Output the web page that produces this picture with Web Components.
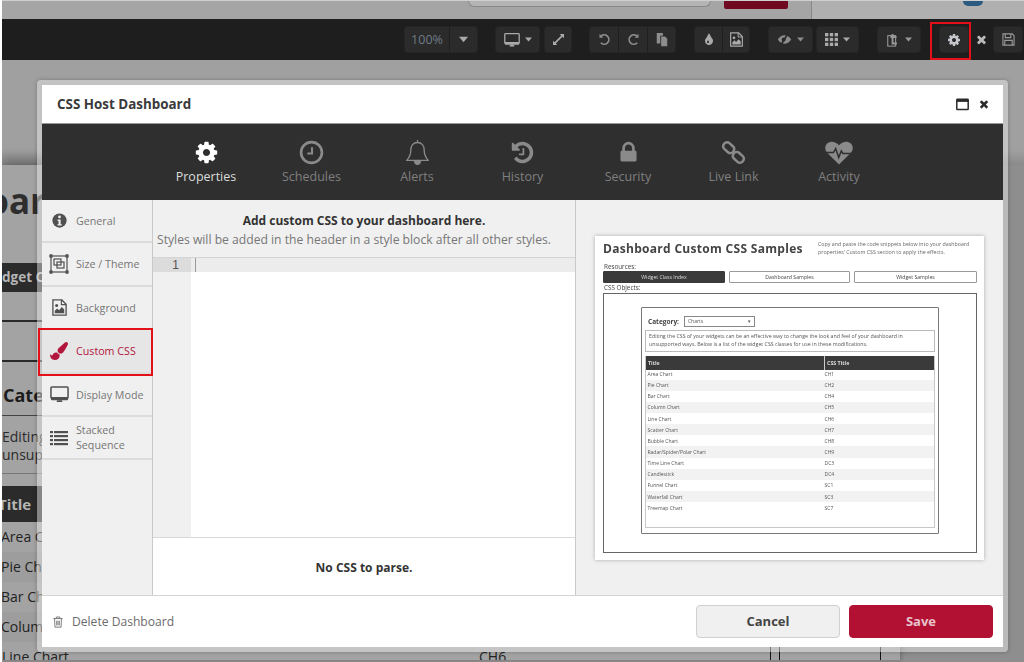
<!DOCTYPE html>
<html><head><meta charset="utf-8"><title>CSS Host Dashboard</title>
<style>
html,body{margin:0;padding:0;width:1024px;height:662px;overflow:hidden;background:#fff}
body{font-family:"Open Sans","Noto Sans",sans-serif}
</style></head><body>
<x-app>
  <x-backdrop slot="back"></x-backdrop>
  <x-modal slot="modal" heading="CSS Host Dashboard"></x-modal>
</x-app>
<script>
const FA={
gear:'M1152 896q0-106-75-181t-181-75-181 75-75 181 75 181 181 75 181-75 75-181zm512-109v222q0 12-8 23t-20 13l-185 28q-19 54-39 91 35 50 107 138 10 12 10 25t-9 23q-27 37-99 108t-94 71q-12 0-26-9l-138-108q-44 23-91 38-16 136-29 186-7 27-35 27h-222q-14 0-24.5-8.5t-11.5-21.5l-28-184q-49-16-90-37l-141 107q-10 9-25 9-14 0-25-11-126-114-165-168-7-10-7-23 0-12 8-23 15-21 51-66.5t54-70.5q-27-50-41-99l-183-27q-13-2-21-12.5t-8-23.5v-222q0-12 8-23t19-13l186-28q14-46 39-92-40-57-107-138-10-12-10-24 0-10 9-23 26-36 98.5-107.5t94.5-71.5q13 0 26 10l138 107q44-23 91-38 16-136 29-186 7-27 35-27h222q14 0 24.5 8.5t11.5 21.5l28 184q49 16 90 37l142-107q9-9 24-9 13 0 25 10 129 119 165 170 7 8 7 22 0 12-8 23-15 21-51 66.5t-54 70.5q26 50 41 98l183 28q13 2 21 12.5t8 23.5z',
history:'M1664 896q0 156-61 298t-164 245-245 164-298 61q-172 0-327-72.5t-264-204.5q-7-10-6.5-22.5t8.5-20.5l137-138q10-9 25-9 16 2 23 12 73 95 179 147t225 52q104 0 198.5-40.5t163.5-109.5 109.5-163.5 40.5-198.5-40.5-198.5-109.5-163.5-163.5-109.5-198.5-40.5q-98 0-188 35.5t-160 101.5l137 138q31 30 14 69-17 40-59 40h-448q-26 0-45-19t-19-45v-448q0-42 40-59 39-17 69 14l130 129q107-101 244.5-156.5t284.5-55.5q156 0 298 61t245 164 164 245 61 298zm-640-288v448q0 14-9 23t-23 9h-320q-14 0-23-9t-9-23v-64q0-14 9-23t23-9h224v-352q0-14 9-23t23-9h64q14 0 23 9t9 23z',
lock:'M640 768h512v-192q0-106-75-181t-181-75-181 75-75 181v192zm832 96v576q0 40-28 68t-68 28h-960q-40 0-68-28t-28-68v-576q0-40 28-68t68-28h32v-192q0-184 132-316t316-132 316 132 132 316v192h32q40 0 68 28t28 68z',
times:'M1490 1322q0 40-28 68l-136 136q-28 28-68 28t-68-28l-294-294-294 294q-28 28-68 28t-68-28l-136-136q-28-28-28-68t28-68l294-294-294-294q-28-28-28-68t28-68l136-136q28-28 68-28t68 28l294 294 294-294q28-28 68-28t68 28l136 136q28 28 28 68t-28 68l-294 294 294 294q28 28 28 68z',
tint:'M896 1152q0-36-20-69-1-1-15.5-22.5t-25.5-38-25-44-21-50.5q-4-16-21-16t-21 16q-7 23-21 50.5t-25 44-25.5 38-15.5 22.5q-20 33-20 69 0 53 37.5 90.5t90.5 37.5 90.5-37.5 37.5-90.5zm512-128q0 212-150 362t-362 150-362-150-150-362q0-145 81-275 6-9 62.5-90.5t101-151 99.5-178 83-201.5q9-30 34-47t51-17 51.5 17 33.5 47q28 93 83 201.5t99.5 178 101 151 62.5 90.5q81 127 81 275z',
brush:'M1615 0q70 0 122.5 46.5t52.5 116.5q0 63-45 151-332 629-465 752-97 91-218 91-126 0-216.5-92.5t-90.5-219.5q0-128 92-212l638-579q59-54 130-54zm-909 1034q39 76 106.5 130t150.5 76l1 71q4 213-129.5 347t-348.5 134q-123 0-218-46.5t-152.5-127.5-86.5-183-29-220q7 5 41 30t62 44.5 59 36.5 46 17q41 0 55-37 25-66 57.5-112.5t69.5-76 88-47.5 103-25.5 125-10.5z'
};
const fa=k=>`<svg viewBox="0 0 1792 1792"><path fill="currentColor" d="${FA[k]}"/></svg>`;
const ICONS={
gear:fa('gear'),history:fa('history'),lock:fa('lock'),times:fa('times'),tint:fa('tint'),brush:fa('brush'),
clock:`<svg viewBox="0 0 24 24" fill="none" stroke="currentColor"><circle cx="12" cy="12" r="10" stroke-width="2.6"/><path d="M12.5 7v6H8" stroke-width="2"/></svg>`,
bell:`<svg viewBox="0 0 24 26" fill="none" stroke="currentColor" stroke-width="1.3"><path d="M12 1v2.400M12 3.400c-4.200 0-6.400 3-6.400 7 0 5-1.300 7.400-4 10.200h20.800c-2.700-2.800-4-5.200-4-10.200 0-4-2.200-7-6.400-7z" stroke-linejoin="round"/><path d="M9.200 21.600c.3 1.800 1.400 2.800 2.800 2.800s2.500-1 2.800-2.800z" fill="currentColor"/></svg>`,
link:`<svg viewBox="0 0 26 26" fill="none" stroke="currentColor" stroke-width="2.600"><rect x="1.800" y="4" width="12.400" height="8" rx="3.600" transform="rotate(42 8 8)"/><rect x="11.800" y="14" width="12.400" height="8" rx="3.600" transform="rotate(42 18 18)"/></svg>`,
heart:`<svg viewBox="0 0 28 24"><path fill="currentColor" d="M14 23.500 2.600 12.300C-.6 9-.4 4.600 2.400 2.200 5.400-.4 10.600.2 14 4.200c3.400-4 8.600-4.600 11.600-2 2.800 2.400 3 6.800-.2 10.100z"/><path fill="none" stroke="#2f2f2f" stroke-width="1.500" d="M1 11.500h7.500l2.200-4 3 9 2.600-6.600 1.600 2.600H27"/></svg>`,
win:`<svg viewBox="0 0 13 12"><rect x=".8" y=".8" width="11.400" height="10.200" rx=".6" fill="none" stroke="currentColor" stroke-width="1.500"/><rect x="1" y="1" width="11" height="2.400" fill="currentColor"/></svg>`,
info:`<svg viewBox="0 0 16 16"><circle cx="8" cy="8" r="7.600" fill="currentColor"/><circle cx="8" cy="4.200" r="1.500" fill="#f0f0f0"/><path d="M6 7h3.200v5H10.400v1.400H5.800V12H7V8.400H6z" fill="#f0f0f0"/></svg>`,
size:`<svg viewBox="0 0 20 20" fill="none" stroke="currentColor"><rect x="2" y="2" width="16" height="16" stroke-width="1.200"/><g fill="#555" stroke="none"><circle cx="2" cy="2" r="1.900"/><circle cx="18" cy="2" r="1.900"/><circle cx="2" cy="18" r="1.900"/><circle cx="18" cy="18" r="1.900"/></g><rect x="5" y="5" width="7" height="6" stroke-width="1.200"/><rect x="8" y="8" width="7" height="6" stroke-width="1.200"/></svg>`,
bg:`<svg viewBox="0 0 16 18"><path d="M1 1h9.500L15 5.500V17H1z" fill="none" stroke="currentColor" stroke-width="1.400"/><path d="M10 1v5h5" fill="none" stroke="currentColor" stroke-width="1.200"/><circle cx="5" cy="7" r="1.600" fill="currentColor"/><path d="M3 15v-2.500L5.500 10l2 2 3-3.400L13 11v4z" fill="currentColor"/></svg>`,
monitor:`<svg viewBox="0 0 20 18"><rect x="1" y="1" width="18" height="12" rx="1" fill="none" stroke="currentColor" stroke-width="1.600"/><path d="M1 11.500h18V14a1 1 0 0 1-1 1H2a1 1 0 0 1-1-1z" fill="currentColor"/><path d="M7.500 15h5l.6 2H6.900z" fill="currentColor"/></svg>`,
list:`<svg viewBox="0 0 18 16" fill="currentColor"><rect x="0" y="1" width="3" height="2.200"/><rect x="4" y="1" width="14" height="2.200"/><rect x="0" y="5" width="3" height="2.200"/><rect x="4" y="5" width="14" height="2.200"/><rect x="0" y="9" width="3" height="2.200"/><rect x="4" y="9" width="14" height="2.200"/><rect x="0" y="13" width="3" height="2.200"/><rect x="4" y="13" width="14" height="2.200"/></svg>`,
trash:`<svg viewBox="0 0 12 14" fill="none" stroke="currentColor" stroke-width="1"><path d="M.5 3h11M4 3V1.200h4V3M2 3l.4 10h7.200L10 3M4.500 5.500v5.500M6 5.500v5.500M7.500 5.500v5.500"/></svg>`,
caret:`<svg viewBox="0 0 10 6"><path d="M0 0h10L5 6z" fill="currentColor"/></svg>`,
expand:`<svg viewBox="0 0 14 14" fill="currentColor"><path d="M8.500 0H14v5.500L12 3.500 3.500 12 5.500 14H0V8.500L2 10.500 10.500 2z"/></svg>`,
undo:`<svg viewBox="0 0 14 14" fill="none" stroke="currentColor" stroke-width="1.800"><path d="M3.500 3.200A5 5 0 1 1 3 10.500"/><path d="M1.600 .8v4.200h4.200z" fill="currentColor" stroke="none"/></svg>`,
redo:`<svg viewBox="0 0 14 14" fill="none" stroke="currentColor" stroke-width="1.800"><path d="M10.500 3.200A5 5 0 1 0 11 10.500"/><path d="M12.400 .8v4.200H8.200z" fill="currentColor" stroke="none"/></svg>`,
paste:`<svg viewBox="0 0 14 16" fill="currentColor"><path d="M1 0h7v3H5v9H1z"/><path d="M6 4h4.500L13 6.500V15H6z"/></svg>`,
eye:`<svg viewBox="0 0 18 14"><path d="M1 7c2.500-3.800 5-5 8-5s5.500 1.200 8 5c-2.500 3.800-5 5-8 5s-5.500-1.200-8-5z" fill="currentColor"/><circle cx="8" cy="7" r="2.400" fill="#2a2a2a"/><path d="M12.500 1 5 13" stroke="#2a2a2a" stroke-width="2"/></svg>`,
grid:`<svg viewBox="0 0 14 14" fill="currentColor"><rect width="3.600" height="3.600"/><rect x="5.200" width="3.600" height="3.600"/><rect x="10.400" width="3.600" height="3.600"/><rect y="5.200" width="3.600" height="3.600"/><rect x="5.200" y="5.200" width="3.600" height="3.600"/><rect x="10.400" y="5.200" width="3.600" height="3.600"/><rect y="10.400" width="3.600" height="3.600"/><rect x="5.200" y="10.400" width="3.600" height="3.600"/><rect x="10.400" y="10.400" width="3.600" height="3.600"/></svg>`,
tee:`<svg viewBox="0 0 14 16" fill="none" stroke="currentColor"><rect x="1" y="3" width="9" height="12" stroke-width="1.200"/><path d="M6.500 1v11h5M4 4.500h7" stroke-width="2.200"/></svg>`,
save:`<svg viewBox="0 0 14 14" fill="none" stroke="currentColor" stroke-width="1.200"><path d="M1 1h10l2 2v10H1z"/><path d="M3.500 1v4h6V1M3 13V8h8v5"/></svg>`
};
const def=(name,html,init)=>customElements.define(name,class extends HTMLElement{
  constructor(){super();this.attachShadow({mode:'open'})}
  connectedCallback(){this.shadowRoot.innerHTML=typeof html==='function'?html(this):html;init&&init(this)}
});
def('x-icon',e=>`<style>:host{display:inline-flex;width:var(--s,16px);height:var(--s,16px);color:inherit;flex:none}svg{width:100%;height:100%;display:block}</style>${ICONS[e.getAttribute('name')]}`);

def('x-app',`<style>:host{display:block;position:relative;width:1024px;height:662px;overflow:hidden}
.m{position:absolute;left:37px;top:80px}</style>
<slot name="back"></slot><div class="m"><slot name="modal"></slot></div>`);

/* ---------- dimmed page behind the dialog ---------- */
def('x-cell',e=>`<style>:host{display:flex;align-items:center;justify-content:center;gap:5px;height:100%;color:#8d8d8d;font-size:12.500px;border-left:1px solid #1f1f1f;box-sizing:border-box}
:host(:first-child){border-left:0}</style><slot></slot>`);
def('x-group',`<style>:host{display:flex;height:25px;background:#2b2b2b;border-radius:3px;box-shadow:0 0 0 1px #252525}</style><slot></slot>`);
def('x-toolbar',`<style>:host{display:flex;align-items:center;height:41px;padding-left:403px;background:#1e1e1e;box-sizing:border-box;width:1022px;flex:none}
::slotted(*){flex:none}</style><slot></slot>`);
def('x-sheet',`<style>:host{display:block;width:898px;height:495px;background:#a3a3a3;color:#1c1c1c;font-weight:400;overflow:hidden;box-shadow:0 -8px 10px rgba(0,0,0,.18),2px 0 3px rgba(0,0,0,.15)}
h1{margin:0;height:70px;width:44px;display:flex;justify-content:flex-end;line-height:72px;font-size:35px;font-weight:700;color:#2e2e2e;white-space:nowrap}
.bar{background:#2b2b2b;color:#b5b5b5;font-weight:700;font-size:13.500px;white-space:nowrap}
.res{height:29px;line-height:29px;margin-top:28px}
.ln{height:2px;background:#2a2a2a}
.cat{height:40px;line-height:40px;font-size:18px;font-weight:700;padding-left:1px;color:#1c1c1c;margin-top:13px}
.l1{height:1px;background:#444}
.tx{font-size:14px;line-height:18px;color:#2a2a2a;padding-top:12px;height:38px}
.l2{height:1px;background:#777}
.tt{height:36px;line-height:36px;text-indent:-4px;font-size:15px;margin-top:12px}
.r{height:30px;line-height:30px;font-size:14px;white-space:nowrap;color:#222;margin-left:-1px}
.r.a{background:#9d9d9d}
.last{display:flex;height:30px;line-height:30px;font-size:14px;color:#222}
.last b{font-weight:400;width:477px}.last i{font-style:normal;width:291px}
.last u{width:1px;background:#111;text-decoration:none;margin-right:8px}
.last u+u{margin-right:100px}
.last u+u+u{margin-right:0}
</style>
<h1>oar</h1>
<div class="bar res">dget C</div>
<div class="ln" style="margin-top:28px"></div><div class="ln" style="margin-top:38px"></div>
<div class="cat">Cate</div><div class="l1"></div>
<div class="tx">Editing<br>unsup</div><div class="l2" style="margin-top:7px"></div>
<div class="bar tt">Title</div>
<div class="r">Area Ch</div><div class="r a">Pie Cha</div><div class="r">Bar Ch</div><div class="r a">Colum</div>
<div class="last"><b>Line Chart</b><i>CH6</i><u></u><u></u><u></u></div>`);
def('x-backdrop',`<style>:host{display:block;width:1024px;height:662px;padding-left:2px;box-sizing:border-box}
.w{width:1022px;height:662px;background:#8e8e8e;display:flex;flex-direction:column;overflow:hidden}
.top{height:19px;flex:none;display:flex;background:#a5a5a5;border-top:1px solid #cfcfcf;box-sizing:border-box}
.pill{width:241px;height:5px;margin-left:466px;border:1px solid #888;border-top:0;border-radius:0 0 8px 8px;background:#b4b4b4}
.red{width:64px;height:8px;margin-left:13px;background:#6f0a20;border-radius:0 0 2px 2px}
.rt{flex:1;margin-left:23px;border-left:1px solid #888;background:#b0b0b0;display:flex}
.dot{width:20px;height:5px;margin-left:151px;background:#2b5a80;border-radius:0 0 10px 10px}
.gap{height:90px;background:#a0a0a0;flex:none}
.band{height:15px;flex:none;background:linear-gradient(#a0a0a0,#8a8a8a)}
</style>
<div class="w">
<div class="top"><div class="pill"></div><div class="red"></div><div class="rt"><div class="dot"></div></div></div>
<x-toolbar>
 <x-group style="width:72px"><x-cell style="width:44px;color:#6f7b88">100%</x-cell><x-cell style="width:28px;color:#aaa"><x-icon name="caret" style="--s:9px"></x-icon></x-cell></x-group>
 <x-group style="margin-left:19px;width:43px"><x-cell style="width:43px;color:#aaa"><x-icon name="monitor" style="--s:16px"></x-icon><x-icon name="caret" style="--s:7px"></x-icon></x-cell></x-group>
 <x-group style="margin-left:6px;width:26px"><x-cell style="width:26px;color:#aaa"><x-icon name="expand" style="--s:11px"></x-icon></x-cell></x-group>
 <x-group style="margin-left:19px;width:85px"><x-cell style="width:28px"><x-icon name="undo" style="--s:13px"></x-icon></x-cell><x-cell style="width:29px"><x-icon name="redo" style="--s:13px"></x-icon></x-cell><x-cell style="width:28px"><x-icon name="paste" style="--s:14px"></x-icon></x-cell></x-group>
 <x-group style="margin-left:20px;width:54px"><x-cell style="width:27px;color:#aaa"><x-icon name="tint" style="--s:14px"></x-icon></x-cell><x-cell style="width:27px;color:#aaa"><x-icon name="bg" style="--s:15px"></x-icon></x-cell></x-group>
 <x-group style="margin-left:20px;width:43px"><x-cell style="width:43px"><x-icon name="eye" style="--s:15px"></x-icon><x-icon name="caret" style="--s:7px"></x-icon></x-cell></x-group>
 <x-group style="margin-left:5px;width:41px"><x-cell style="width:41px;color:#aaa"><x-icon name="grid" style="--s:13px"></x-icon><x-icon name="caret" style="--s:7px"></x-icon></x-cell></x-group>
 <x-group style="margin-left:20px;width:42px"><x-cell style="width:42px;color:#999"><x-icon name="tee" style="--s:14px"></x-icon><x-icon name="caret" style="--s:7px"></x-icon></x-cell></x-group>
 <x-group style="margin-left:20px;width:28px"><x-cell style="width:28px;color:#c4c8cc"><x-icon name="gear" style="--s:14px"></x-icon></x-cell></x-group>
 <x-cell style="width:26px;border:0;color:#bbb;height:25px"><x-icon name="times" style="--s:13px"></x-icon></x-cell>
 <x-group style="width:28px"><x-cell style="width:28px;color:#999"><x-icon name="save" style="--s:13px"></x-icon></x-cell></x-group>
</x-toolbar>
<div class="gap"></div><div class="band"></div>
<x-sheet></x-sheet>
</div>
<x-mark></x-mark>`);
def('x-mark',`<style>:host{display:block;position:absolute;left:930px;top:22px;width:41px;height:38px;border:2px solid #e3101a;box-sizing:border-box}</style>`);

/* ---------- dialog ---------- */
def('x-tab',e=>`<style>:host{display:flex;flex-direction:column;align-items:center;width:105.500px;flex:none;color:${e.hasAttribute('active')?'#fff':'#8a8a8a'};padding-top:15px;box-sizing:border-box}
.i{height:27px;display:flex;align-items:center;justify-content:center}
.t{margin-top:2px;font-size:12.500px;line-height:18px;color:${e.hasAttribute('active')?'#dcdcdc':'#7f7f7f'}}</style>
<div class="i"><x-icon name="${e.getAttribute('icon')}" style="--s:${e.getAttribute('s')||25}px"></x-icon></div><div class="t"><slot></slot></div>`);
def('x-side',e=>{const a=e.hasAttribute('active');return `<style>:host{display:flex;align-items:center;height:43.400px;box-sizing:border-box;border-bottom:2px solid #dcdcdc;padding-left:7px;background:${a?'#e6e6e6':'#f0f0f0'};color:${a?'#b3163c':'#767676'};font-size:10.700px;line-height:15px;flex:none}
.ic{width:20px;height:20px;display:flex;align-items:center;justify-content:center;color:${a?'#b3163c':'#505050'};margin-right:7px;flex:none}
.lb{padding-top:1.500px}</style>
<div class="ic"><x-icon name="${e.getAttribute('icon')}" style="--s:${e.getAttribute('s')||18}px"></x-icon></div><div class="lb"><slot></slot></div>`});
def('x-editor',`<style>:host{display:flex;flex-direction:column;width:424px;flex:none;background:#fff;border-left:1px solid #c9c9c9;border-right:1px solid #c9c9c9;box-sizing:border-box;color:#333}
.hd{height:58px;background:#f0f0f0;box-sizing:border-box;padding:12px 0 0 4px;font-size:12px;line-height:18.500px;border-bottom:1px solid #d4d4d4;flex:none}
.hd b{font-weight:700;color:#333;display:block;text-align:center;padding-right:4px}.hd span{color:#777;font-size:12.150px;white-space:nowrap}
.code{flex:1;display:grid;grid-template-columns:38px 1fr;grid-template-rows:14px 1fr}
.n{background:#dcdcdc;color:#555;font-size:12px;line-height:14px;text-align:right;padding-right:12px;box-sizing:border-box;font-family:"Liberation Sans","Open Sans",sans-serif}
.act{background:#ececec;padding-left:4px}.act i{display:block;width:1px;height:14px;background:#999}
.g{background:#f0f0f0}.b{background:#fff}
.ft{height:58px;flex:none;border-top:1px solid #d8d8d8;box-sizing:border-box;display:flex;align-items:center;justify-content:center;font-weight:700;font-size:12px;color:#333;padding-bottom:1px;padding-top:2px}
</style>
<div class="hd"><b>Add custom CSS to your dashboard here.</b><span>Styles will be added in the header in a style block after all other styles.</span></div>
<div class="code"><div class="n">1</div><div class="act"><i></i></div><div class="g"></div><div class="b"></div></div>
<div class="ft">No CSS to parse.</div>`);
const ROWS=[['Area Chart','CH1'],['Pie Chart','CH2'],['Bar Chart','CH4'],['Column Chart','CH5'],['Line Chart','CH6'],['Scatter Chart','CH7'],['Bubble Chart','CH8'],['Radar/Spider/Polar Chart','CH9'],['Time Line Chart','DC3'],['Candlestick','DC4'],['Funnel Chart','SC1'],['Waterfall Chart','SC3'],['Treemap Chart','SC7']];
def('x-preview',`<style>:host{display:block;width:389px;height:324px;background:#fff;box-shadow:0 0 4px rgba(0,0,0,.28);box-sizing:border-box;padding:0 7px 0 8px;color:#444;filter:blur(.4px);flex:none}
.h{display:flex;height:27px;align-items:center}
.h b{font-size:12px;letter-spacing:.3px;color:#444;width:215px;flex:none;white-space:nowrap;padding-bottom:2px}
.h p{margin:0;font-size:5.300px;line-height:8px;color:#666;white-space:nowrap;padding-bottom:3px}
.lab{font-size:6.300px;line-height:8px;padding-left:1px;color:#444}
.btns{display:grid;grid-template-columns:122px 121px 123px;gap:4px;height:12px}
.btns div{border:1px solid #999;font-size:5.200px;line-height:10px;text-align:center;color:#444;box-sizing:border-box;border-radius:1px}
.btns div:first-child{background:#3a3a3a;border-color:#3a3a3a;color:#ddd}
.box{border:1.500px solid #666;height:260px;box-sizing:border-box;padding:13px 37px 0 37px;margin-top:1px}
.in{border:1.500px solid #777;height:227px;box-sizing:border-box;padding:7px 3px 0 3px;border-radius:1px}
.c{display:flex;align-items:center;height:12px;padding-left:3px;font-size:6.500px;font-weight:700}
.sel{margin-left:5px;width:71px;height:11px;border:1px solid #888;box-sizing:border-box;font-weight:400;font-size:5px;line-height:9px;padding:0 3px;display:flex;justify-content:space-between;color:#555}
.d{border:1.500px solid #bbb;height:22px;box-sizing:border-box;margin-top:3px;padding:2px 3px;font-size:5.250px;line-height:7.800px;color:#555;white-space:nowrap}
.t{border:1px solid #c8c8c8;border-top:0;height:172px;margin-top:4px;box-sizing:border-box}
.tr{display:grid;grid-template-columns:177px 1fr;height:11.150px;align-items:center;font-size:5px;color:#555;padding-left:1.500px}
.tr:nth-child(even){background:#f2f2f2}
#rows{margin-top:-1.500px}
.th{display:grid;grid-template-columns:178px 1fr;height:14px;background:#3a3a3a;color:#ddd;font-size:5.300px;font-weight:700;line-height:14px;position:relative}
.th span{padding-left:2px}.th span+span{border-left:1px solid #ccc;padding-left:2px}
</style>
<div class="h"><b>Dashboard Custom CSS Samples</b><p>Copy and paste the code snippets below into your dashboard<br>properties' Custom CSS section to apply the effects.</p></div>
<div class="lab">Resources:</div>
<div class="btns"><div>Widget Class Index</div><div>Dashboard Samples</div><div>Widget Samples</div></div>
<div class="lab" style="margin-top:1px">CSS Objects:</div>
<div class="box"><div class="in">
<div class="c">Category:<div class="sel"><span>Charts</span><span>▾</span></div></div>
<div class="d">Editing the CSS of your widgets can be an effective way to change the look and feel of your dashboard in<br>unsupported ways. Below is a list of the widget CSS classes for use in these modifications.</div>
<div class="t"><div class="th"><span>Title</span><span>CSS Title</span></div><div id="rows"></div></div>
</div></div>`,e=>{e.shadowRoot.getElementById('rows').innerHTML=ROWS.map(r=>`<div class="tr"><span>${r[0]}</span><span>${r[1]}</span></div>`).join('')});
def('x-btn',e=>{const p=e.hasAttribute('primary');return `<style>:host{display:flex;align-items:center;justify-content:center;width:144px;height:33px;box-sizing:border-box;border-radius:4px;font-weight:700;font-size:13px;padding-bottom:2px;background:${p?'#b31133':'#f0f0f0'};color:${p?'#e7c3cc':'#444'};border:1px solid ${p?'#b31133':'#d0d0d0'};flex:none}</style><slot></slot>`});
def('x-modal',e=>`<style>:host{display:flex;flex-direction:column;width:971px;height:572px;box-sizing:border-box;border:5px solid rgba(235,235,235,.48);border-radius:4px;background-clip:padding-box;box-shadow:0 0 4px rgba(0,0,0,.25)}
.head{height:38px;background:#fff;display:flex;align-items:center;padding:0 13px 0 15px;flex:none;color:#2b2b2b}
.head b{flex:1;font-size:13.400px;font-weight:700;color:#3a3a3a}
.tabs{height:77px;background:#2f2f2f;display:flex;justify-content:center;flex:none;border-top:1px solid #999;box-sizing:border-box}
.body{flex:1;display:flex;min-height:0}
.side{width:110px;flex:none;background:#f0f0f0;display:flex;flex-direction:column}
.mark{position:relative}
.mark::after{content:"";position:absolute;left:-4px;top:-2px;width:115px;height:48px;border:2px solid #e3101a;box-sizing:border-box;pointer-events:none}
.right{flex:1;background:#f0f0f0;padding:36px 0 0 19px;box-sizing:border-box}
.foot{height:52px;background:#fff;border-top:1px solid #d4d4d4;box-sizing:border-box;display:flex;align-items:center;padding:0 10px 0 10px;flex:none;color:#6b6b6b;font-size:12.100px}
.foot span{flex:1;margin-left:8px}
</style>
<div class="head"><b>${e.getAttribute('heading')}</b><x-icon name="win" style="--s:13px;margin-right:9px"></x-icon><x-icon name="times" style="--s:12px"></x-icon></div>
<div class="tabs">
<x-tab icon="gear" active>Properties</x-tab><x-tab icon="clock">Schedules</x-tab><x-tab icon="bell" s="27">Alerts</x-tab><x-tab icon="history">History</x-tab><x-tab icon="lock">Security</x-tab><x-tab icon="link">Live Link</x-tab><x-tab icon="heart" s="28">Activity</x-tab>
</div>
<div class="body">
<div class="side">
<x-side icon="info" s="15">General</x-side><x-side icon="size" s="20">Size / Theme</x-side><x-side icon="bg" s="17">Background</x-side>
<div class="mark"><x-side icon="brush" s="18" active>Custom CSS</x-side></div>
<x-side icon="monitor" s="19">Display Mode</x-side><x-side icon="list" s="18">Stacked<br>Sequence</x-side>
</div>
<x-editor></x-editor>
<div class="right"><x-preview></x-preview></div>
</div>
<div class="foot"><x-icon name="trash" style="--s:12px"></x-icon><span>Delete Dashboard</span><x-btn>Cancel</x-btn><x-btn primary style="margin-left:9px">Save</x-btn></div>`);
</script>
</body></html>
